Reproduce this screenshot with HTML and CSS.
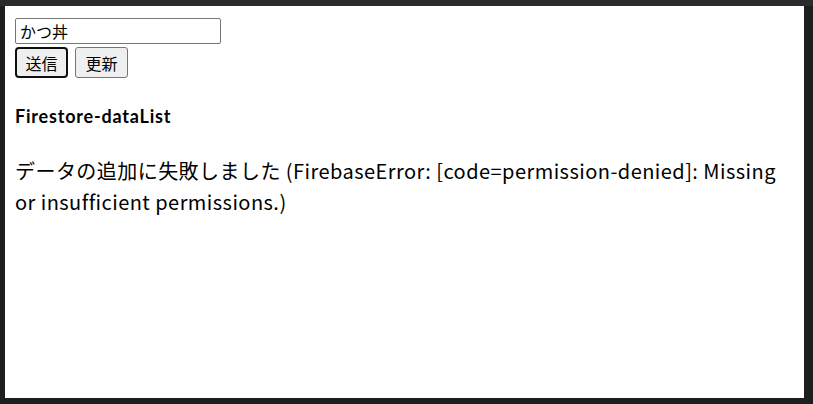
FILE: index.html
```html
<!DOCTYPE html>
<html lang="ja">
<head>
<meta charset="utf-8">
<title>Firestore</title>
<link rel="stylesheet" href="styles.css">
</head>
<body>
<div class="frame">
  <main class="page">
    <form class="form">
      <input class="field" type="text" value="かつ丼">
      <div class="actions">
        <button type="button" class="btn btn-focus">送信</button>
        <button type="button" class="btn">更新</button>
      </div>
    </form>
    <h3 class="title">Firestore-dataList</h3>
    <p class="message">データの追加に失敗しました (FirebaseError: [code=permission-denied]: Missing or insufficient permissions.)</p>
  </main>
</div>
</body>
</html>
```
FILE: styles.css
```css
html, body {
  margin: 0;
  padding: 0;
  height: 100%;
  background: #1e1e1e;
}
.frame {
  box-sizing: border-box;
  height: 404px;
  padding: 0 9px 6px 5px;
  background: #1e1e1e;
  border-top: 6px solid #2b2b2b;
}
.page {
  box-sizing: border-box;
  height: 100%;
  background: #ffffff;
  padding: 12px 10px 0 10px;
  font-family: "Noto Sans CJK JP", sans-serif;
  color: #000;
}
.form {
  display: flex;
  flex-direction: column;
  gap: 3px;
}
.field {
  box-sizing: border-box;
  width: 206px;
  height: 26px;
  margin: 0;
  padding: 0 4px;
  border: 1px solid #767676;
  border-radius: 2px;
  font-family: "Noto Sans CJK JP", sans-serif;
  font-size: 16px;
  color: #000;
  background: #fff;
}
.actions {
  display: flex;
  gap: 7px;
}
.btn {
  box-sizing: border-box;
  width: 53px;
  height: 31px;
  margin: 0;
  padding: 0;
  border: 1px solid #767676;
  border-radius: 3px;
  background: #efefef;
  font-family: "Noto Sans CJK JP", sans-serif;
  font-size: 16px;
  color: #000;
}
.btn-focus {
  border: 2px solid #101010;
  border-radius: 4px;
}
.title {
  margin: 27px 0 0 0;
  font-family: "Lato", "Noto Sans CJK JP", sans-serif;
  font-weight: 700;
  font-size: 18px;
  letter-spacing: 0.8px;
  line-height: 22px;
}
.message {
  margin: 28px 0 0 0;
  font-size: 20px;
  letter-spacing: 0.45px;
  line-height: 31px;
  font-family: "Noto Sans CJK JP", sans-serif;
}
```
